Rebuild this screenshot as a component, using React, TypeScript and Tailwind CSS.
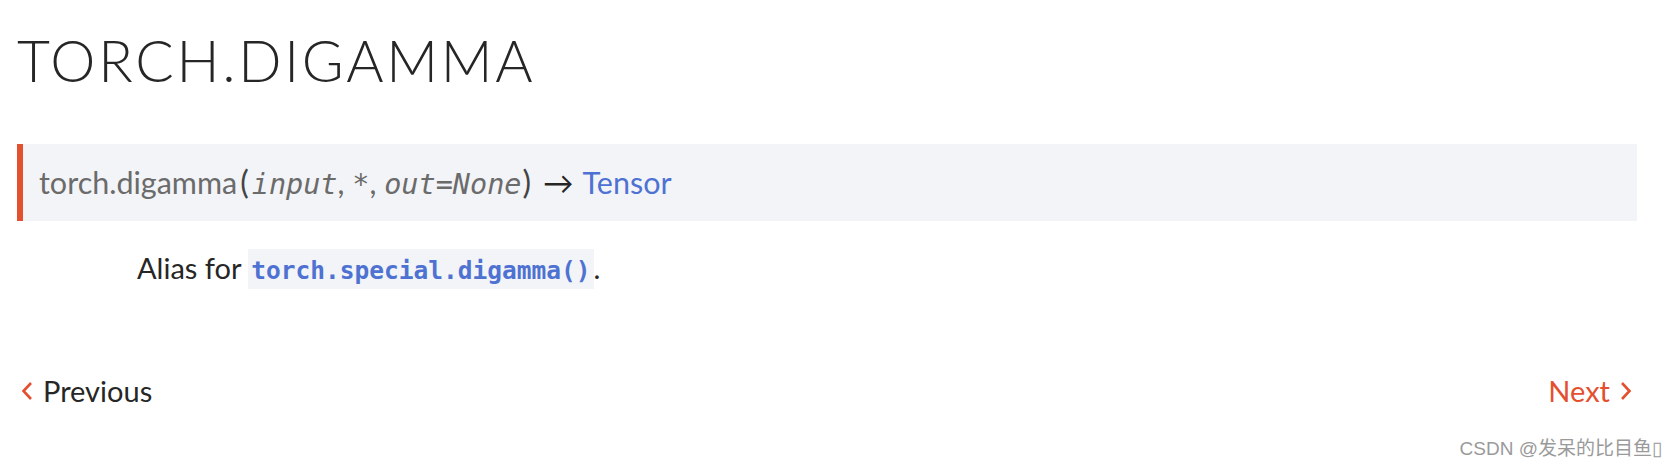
const sans = "font-['Lato','Noto_Sans',sans-serif]";
const mono = "font-['DejaVu_Sans_Mono',monospace]";

const App = () => {
  return (
    <div className={`w-[1676px] h-[464px] bg-white pl-[17px] pr-[39px] ${sans}`}>
      <h1 className="pt-[32px] text-[57px] leading-[57px] font-light tracking-[2.7px] text-[#262626]">
        TORCH.DIGAMMA
      </h1>

      {/* signature */}
      <div className="mt-[55px] h-[77px] flex items-center border-l-[6px] border-l-[#e4502f] bg-[#f3f4f7] pl-[16px]">
        <span className="text-[30.5px] leading-[77px] text-[#6b6b6b] whitespace-nowrap">
          torch.digamma
          <span className="text-[32px] text-[#444] pl-[3px] pr-[3px]">(</span>
          <em className={`${mono} text-[28.5px] italic`}>input</em>
          ,{" "}
          <em className={`${mono} text-[28.5px] italic`}>*</em>
          ,{" "}
          <em className={`${mono} text-[28.5px] italic`}>out=None</em>
          <span className="text-[32px] text-[#444] pl-[1px]">)</span>
          <span className="text-[#262626] pl-[12px] pr-[9px]">→</span>
          <span className="text-[#4e72d2]">Tensor</span>
        </span>
      </div>

      <p className="mt-[27px] pl-[120px] text-[29px] leading-[40px] text-[#262626]">
        Alias for{" "}
        <code className={`${mono} font-bold text-[24.5px] text-[#4e72d2] bg-[#f3f4f7] pt-[7px] pb-[4px] px-[3px]`}>
          torch.special.digamma()
        </code>
        .
      </p>

      {/* prev / next */}
      <div className="mt-[80px] flex justify-between items-center text-[29px] leading-[40px]">
        <a className="flex items-center gap-[10px] text-[#262626]">
          <svg width="12" height="20" viewBox="0 0 12 20" className="ml-[4px]">
            <path d="M10 2 L2.5 10 L10 18" stroke="#e4502f" strokeWidth="2.6" fill="none" />
          </svg>
          Previous
        </a>
        <a className="flex items-center gap-[10px] text-[#e4502f]">
          Next
          <svg width="12" height="20" viewBox="0 0 12 20" className="mr-[5px]">
            <path d="M2 2 L9.5 10 L2 18" stroke="#e4502f" strokeWidth="2.6" fill="none" />
          </svg>
        </a>
      </div>

      <div className="mt-[27px] -mr-[25px] text-right text-[19px] leading-[22px] text-[#9a9a9a] font-['Liberation_Sans','Noto_Sans_CJK_SC',sans-serif]">
        CSDN @发呆的比目鱼▯
      </div>
    </div>
  );
};

export default App;
